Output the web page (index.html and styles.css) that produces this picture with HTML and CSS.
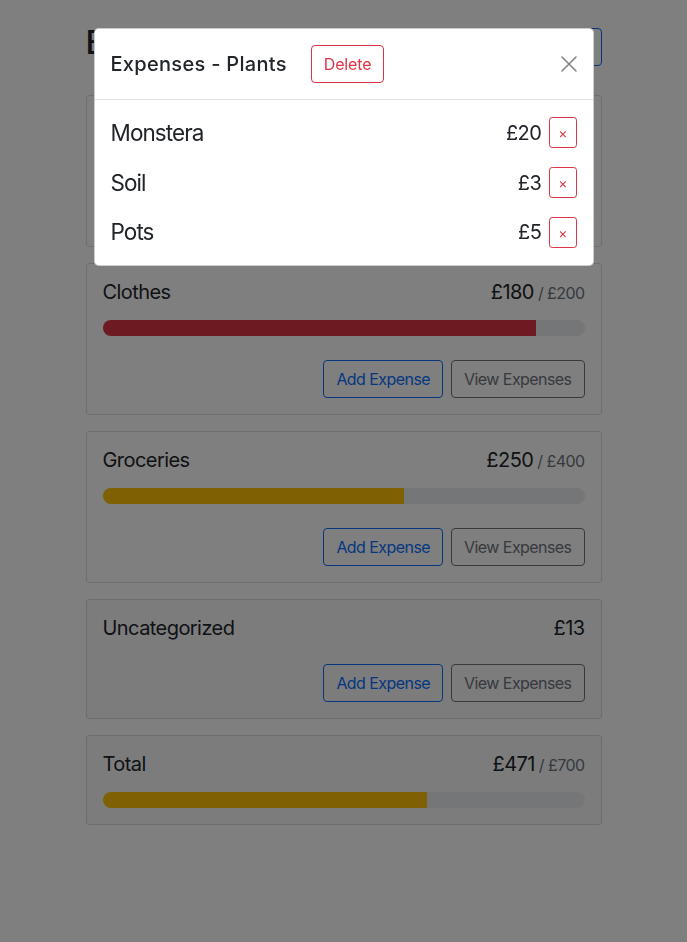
FILE: index.html
```html
<!DOCTYPE html>
<html lang="en">
<head>
<meta charset="utf-8">
<title>Budgets</title>
<link rel="stylesheet" href="styles.css">
</head>
<body>
<div class="container">
  <div class="header">
    <h1 class="page-title">Budgets</h1>
    <button class="btn btn-primary">Add Budget</button>
    <button class="btn btn-outline-primary">Add Expense</button>
  </div>
  <div class="grid">
    <div class="card">
      <div class="card-body">
        <div class="card-title"><div class="name">Plants</div><div class="amount">£28<span class="max">/ £100</span></div></div>
        <div class="progress"><div class="bar bar-primary" style="width:28%"></div></div>
        <div class="actions"><button class="btn btn-outline-primary">Add Expense</button><button class="btn btn-outline-secondary">View Expenses</button></div>
      </div>
    </div>
    <div class="card">
      <div class="card-body">
        <div class="card-title"><div class="name">Clothes</div><div class="amount">£180<span class="max">/ £200</span></div></div>
        <div class="progress"><div class="bar bar-danger" style="width:90%"></div></div>
        <div class="actions"><button class="btn btn-outline-primary">Add Expense</button><button class="btn btn-outline-secondary">View Expenses</button></div>
      </div>
    </div>
    <div class="card">
      <div class="card-body">
        <div class="card-title"><div class="name">Groceries</div><div class="amount">£250<span class="max">/ £400</span></div></div>
        <div class="progress"><div class="bar bar-warning" style="width:62.5%"></div></div>
        <div class="actions"><button class="btn btn-outline-primary">Add Expense</button><button class="btn btn-outline-secondary">View Expenses</button></div>
      </div>
    </div>
    <div class="card card-light">
      <div class="card-body">
        <div class="card-title"><div class="name">Uncategorized</div><div class="amount">£13</div></div>
        <div class="actions"><button class="btn btn-outline-primary">Add Expense</button><button class="btn btn-outline-secondary">View Expenses</button></div>
      </div>
    </div>
    <div class="card card-light">
      <div class="card-body">
        <div class="card-title"><div class="name">Total</div><div class="amount">£471<span class="max">/ £700</span></div></div>
        <div class="progress"><div class="bar bar-warning" style="width:67.2857%"></div></div>
      </div>
    </div>
  </div>
</div>

<div class="backdrop"></div>
<div class="modal">
  <div class="modal-dialog">
    <div class="modal-content">
      <div class="modal-header">
        <div class="modal-title">
          <div>Expenses - Plants</div>
          <button class="btn btn-outline-danger">Delete</button>
        </div>
        <button class="btn-close" aria-label="Close">
          <svg viewBox="0 0 16 16" width="16" height="16"><path d="M1 1L15 15M15 1L1 15" stroke="currentColor" stroke-width="1.5" stroke-linecap="round"/></svg>
        </button>
      </div>
      <div class="modal-body">
        <div class="expense"><div class="exp-name">Monstera</div><div class="exp-amount">£20</div><button class="btn btn-sm btn-outline-danger">×</button></div>
        <div class="expense"><div class="exp-name">Soil</div><div class="exp-amount">£3</div><button class="btn btn-sm btn-outline-danger">×</button></div>
        <div class="expense"><div class="exp-name">Pots</div><div class="exp-amount">£5</div><button class="btn btn-sm btn-outline-danger">×</button></div>
      </div>
    </div>
  </div>
</div>
</body>
</html>
```

FILE: styles.css
```css
* { box-sizing: border-box; }
html, body { margin: 0; padding: 0; }
body {
  font-family: Inter, "Liberation Sans", sans-serif;
  font-size: 16px;
  line-height: 1.5;
  letter-spacing: -0.035em;
  color: #212529;
  background: #fff;
}
.container {
  max-width: 540px;
  margin: 24px auto;
  padding: 0 12px;
}
.header {
  display: flex;
  align-items: center;
  gap: 8px;
  margin-bottom: 24px;
}
.page-title {
  font-size: 32.3px;
  font-weight: 500;
  line-height: 1.2;
  margin: 0 auto 8px 0;
}
.btn {
  display: inline-block;
  font-family: inherit;
  font-size: 16px;
  line-height: 1.5;
  letter-spacing: -0.035em;
  padding: 6px 12px;
  border: 1px solid transparent;
  border-radius: 4px;
  background: transparent;
  cursor: pointer;
}
.btn-primary { background: #0d6efd; border-color: #0d6efd; color: #fff; }
.btn-outline-primary { color: #0d6efd; border-color: #0d6efd; }
.btn-outline-secondary { color: #6c757d; border-color: #6c757d; }
.btn-outline-danger { color: #dc3545; border-color: #dc3545; }
.btn-sm { font-size: 14px; padding: 4px 8px; border-radius: 3.2px; letter-spacing: 0; }

.grid {
  display: grid;
  grid-template-columns: repeat(auto-fill, minmax(300px, 1fr));
  gap: 16px;
  align-items: start;
}
.card {
  background: #fff;
  border: 1px solid rgba(0,0,0,.125);
  border-radius: 4px;
}
.card-light { background: #f8f9fa; }
.card-body { padding: 16px; }
.card-title {
  display: flex;
  justify-content: space-between;
  align-items: baseline;
  font-size: 20px;
  line-height: 1.2;
  margin: 0 0 16px;
}
.name { margin-right: 8px; }
.amount { display: flex; align-items: baseline; }
.max { color: #6c757d; font-size: 16px; margin-left: 4px; }
.progress {
  height: 16px;
  background: #e9ecef;
  border-radius: 50rem;
  overflow: hidden;
  display: flex;
}
.bar { height: 100%; }
.bar-primary { background: #0d6efd; }
.bar-warning { background: #ffc107; }
.bar-danger { background: #dc3545; }
.actions {
  display: flex;
  justify-content: flex-end;
  gap: 8px;
  margin-top: 24px;
}

.backdrop {
  position: fixed;
  inset: 0;
  background: rgba(0,0,0,.5);
}
.modal {
  position: fixed;
  inset: 0;
}
.modal-dialog {
  max-width: 500px;
  margin: 28px auto;
}
.modal-content {
  background: #fff;
  border: 1px solid rgba(0,0,0,.2);
  border-radius: 4.8px;
}
.modal-header {
  display: flex;
  align-items: center;
  padding: 16px;
  border-bottom: 1px solid #dee2e6;
}
.modal-title {
  display: flex;
  align-items: center;
  gap: 24px;
  font-size: 20px;
  font-weight: 500;
  line-height: 1.5;
  letter-spacing: 0.015em;
}
.modal-title .btn { letter-spacing: -0.01em; }
.btn-close {
  margin: -8px -8px -8px auto;
  padding: 8px;
  width: 32px;
  height: 32px;
  border: 0;
  background: transparent;
  color: #000;
  opacity: .5;
  display: flex;
  cursor: pointer;
}
.modal-body {
  padding: 16px;
  display: flex;
  flex-direction: column;
  gap: 16px;
}
.expense {
  display: flex;
  align-items: center;
  gap: 8px;
}
.exp-name { margin-right: auto; font-size: 22.46px; letter-spacing: -0.04em; }
.exp-amount { font-size: 20px; }
```
